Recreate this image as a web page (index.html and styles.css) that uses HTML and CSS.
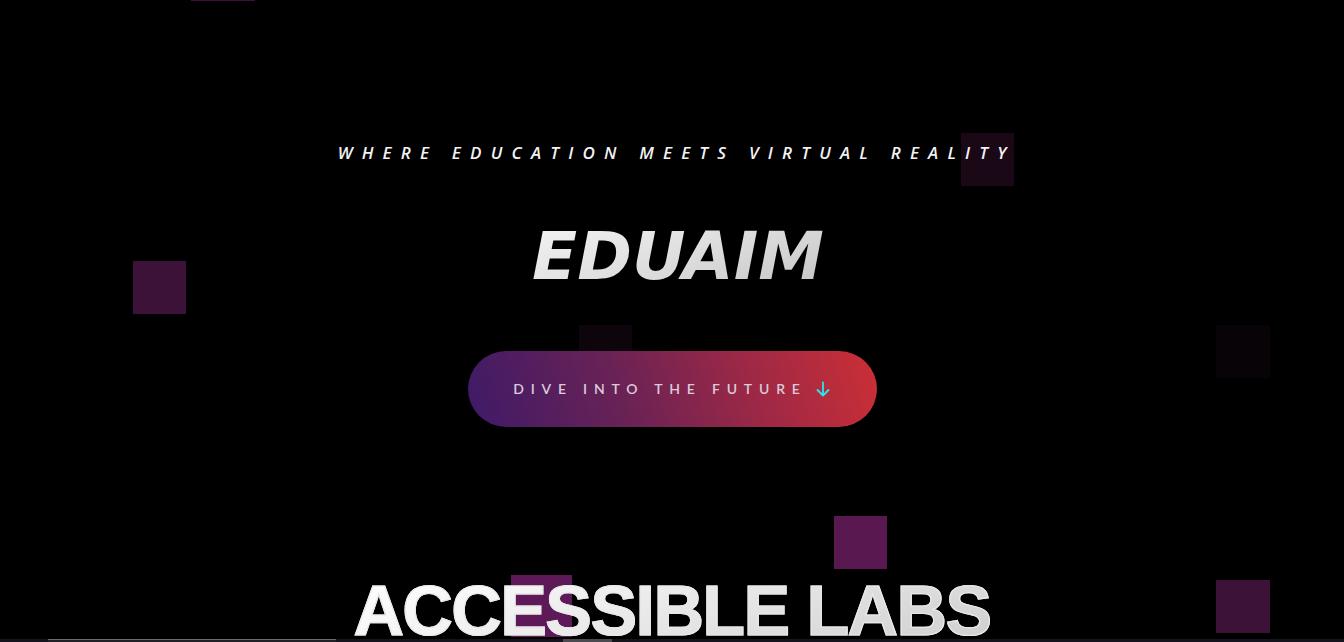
FILE: index.html
```html
<!DOCTYPE html>
<html lang="en">
<head>
<meta charset="utf-8">
<title>EDUAIM</title>
<link rel="stylesheet" href="styles.css">
</head>
<body>
<div class="page">
  <div class="squares" aria-hidden="true">
    <span class="sq sq-a"></span>
    <span class="sq sq-b"></span>
    <span class="sq sq-c"></span>
    <span class="sq sq-d"></span>
    <span class="sq sq-e"></span>
    <span class="sq sq-f"></span>
    <span class="sq sq-g"></span>
    <span class="sq sq-h"></span>
  </div>
  <main class="content">
    <section class="hero">
      <p class="tagline">WHERE EDUCATION MEETS VIRTUAL REALITY</p>
      <h1 class="brand">EDUAIM</h1>
      <a class="cta" href="#labs">
        <span class="cta-text">DIVE INTO THE FUTURE</span>
        <svg class="cta-arrow" width="16" height="16" viewBox="0 0 16 16" fill="none" stroke="currentColor" stroke-width="1.8" stroke-linecap="round" stroke-linejoin="round"><path d="M8 1.5v13M2.5 9l5.5 5.5L13.5 9"/></svg>
      </a>
    </section>
    <section class="labs" id="labs">
      <h2 class="labs-title">ACCESSIBLE LABS</h2>
      <div class="cards">
        <div class="card-edge edge-1"></div>
        <div class="card-edge edge-2"></div>
        <div class="card-edge edge-3"></div>
        <div class="card-edge edge-4"></div>
        <div class="card-edge edge-5"></div>
      </div>
    </section>
  </main>
</div>
</body>
</html>
```
FILE: styles.css
```css
html, body {
  margin: 0;
  padding: 0;
  background: #000;
}
body {
  width: 1344px;
  height: 642px;
  overflow: hidden;
  font-family: "Open Sans", "Liberation Sans", sans-serif;
  color: #fff;
}
.page {
  position: relative;
  width: 1344px;
  height: 642px;
  overflow: hidden;
}
.squares {
  position: absolute;
  inset: 0;
  z-index: 0;
}
.sq {
  position: absolute;
  display: block;
}
.sq-a { left: 191px; top: -63px; width: 64px; height: 64px; background: #3f0f3a; }
.sq-b { left: 961px; top: 133px; width: 53px; height: 53px; background: #1a0817; }
.sq-c { left: 133px; top: 261px; width: 53px; height: 53px; background: #3d1238; }
.sq-d { left: 579px; top: 325px; width: 53px; height: 53px; background: #0e040c; }
.sq-e { left: 1216px; top: 325px; width: 54px; height: 53px; background: #080306; }
.sq-f { left: 834px; top: 516px; width: 53px; height: 53px; background: #5a1850; }
.sq-g { left: 511px; top: 575px; width: 61px; height: 62px; background: #5e1a58; }
.sq-h { left: 1216px; top: 580px; width: 54px; height: 53px; background: #3d1238; }

.content {
  position: relative;
  z-index: 1;
}
.hero {
  display: flex;
  flex-direction: column;
  align-items: center;
  padding-top: 144px;
}
.tagline {
  margin: 0;
  font-family: "Open Sans", sans-serif;
  font-style: italic;
  font-weight: 600;
  font-size: 17px;
  line-height: 17px;
  letter-spacing: 9.2px;
  padding-left: 9.2px;
  color: #f2f2f2;
}
.brand {
  margin: 63px 0 0;
  font-family: "DejaVu Sans", sans-serif;
  font-style: italic;
  font-weight: 700;
  font-size: 66px;
  line-height: 66px;
  letter-spacing: 0;
  background: linear-gradient(160deg, #f4f4f4 0%, #dcdcdc 55%, #c4c4c4 100%);
  -webkit-background-clip: text;
  background-clip: text;
  color: transparent;
  padding: 0 2px 0 14px;
}
.cta {
  margin-top: 61px;
  width: 409px;
  height: 76px;
  box-sizing: border-box;
  border-radius: 38px;
  display: flex;
  align-items: center;
  justify-content: center;
  gap: 8px;
  padding-bottom: 2px;
  text-decoration: none;
  background: linear-gradient(72deg, #3e1a68 0%, #6a2255 38%, #9c2846 68%, #cc2f35 100%);
}
.cta-text {
  font-family: "Lato", sans-serif;
  font-weight: 600;
  font-size: 14px;
  letter-spacing: 6.8px;
  color: #dccbdc;
}
.cta-arrow {
  color: #28e6f2;
  margin-top: 1px;
}
.labs {
  display: flex;
  flex-direction: column;
  align-items: center;
}
.labs-title {
  margin: 155px 0 0;
  font-family: "Liberation Sans", Arial, sans-serif;
  font-weight: 700;
  font-size: 70px;
  line-height: 58px;
  letter-spacing: -1.6px;
  background: linear-gradient(160deg, #ffffff 0%, #e8e8e8 50%, #cfcfcf 100%);
  -webkit-background-clip: text;
  background-clip: text;
  color: transparent;
  -webkit-text-stroke: 1.2px #e9e9e9;
}
.cards {
  margin-top: -1px;
  width: 100%;
  height: 3px;
  display: flex;
  background: #15131c;
}
.card-edge {
  height: 3px;
}
.edge-1 { width: 48px; }
.edge-2 { width: 288px; border-top: 1px solid #6a6a6a; box-sizing: border-box; background: #222027; }
.edge-3 { width: 227px; }
.edge-4 { width: 49px; background: #4a4a50; }
.edge-5 { flex: 1; }
```
